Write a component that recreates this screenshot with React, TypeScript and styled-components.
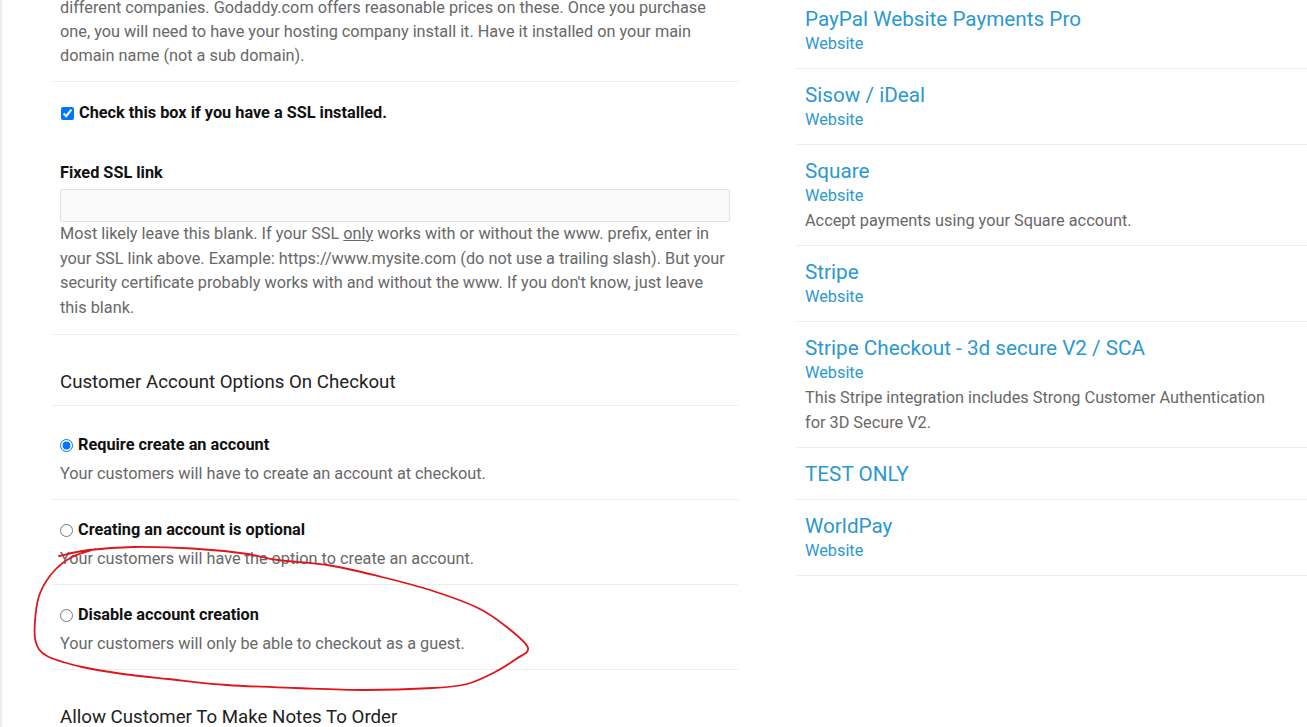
import React from "react";
import styled, { createGlobalStyle } from "styled-components";

const GlobalStyle = createGlobalStyle`
  html, body { margin: 0; padding: 0; background: #ffffff; }
  body { font-family: Roboto, "Noto Sans", Arial, sans-serif; -webkit-font-smoothing: antialiased; }
  * { box-sizing: border-box; }
`;

const Root = styled.div`
  position: relative;
  height: 727px;
  overflow: hidden;
  border-left: 2px solid #ececec;
`;

const Page = styled.div`
  display: grid;
  grid-template-columns: 686px 511px;
  column-gap: 58px;
  padding-left: 50px;
  margin-top: -7px;
`;

const LeftCol = styled.div`
  display: flex;
  flex-direction: column;
  padding-top: 3px;
`;

const Row = styled.div<{ $pt: number; $pb: number; $line?: boolean }>`
  padding: ${(p) => p.$pt}px 8px ${(p) => p.$pb}px;
  border-bottom: ${(p) => (p.$line === false ? "none" : "1px solid #eeeeee")};
`;

const Text = styled.p<{ $lh?: number }>`
  margin: 0;
  font-size: 16.3px;
  line-height: ${(p) => p.$lh ?? 24.5}px;
  color: #686868;
  white-space: nowrap;
`;

const OptionLabel = styled.label`
  display: flex;
  align-items: center;
  font-size: 16.3px;
  line-height: 24px;
  font-weight: 700;
  color: #111111;
`;

const Check = styled.input`
  width: 13px;
  height: 13px;
  margin: 0 5px 0 1px;
  accent-color: #0075ff;
`;

const Radio = styled.input`
  width: 13px;
  height: 13px;
  margin: 0 5px 0 0;
  accent-color: #0075ff;
`;

const FieldLabel = styled.div`
  font-size: 16.3px;
  line-height: 24px;
  font-weight: 700;
  color: #111111;
`;

const TextInput = styled.input`
  display: block;
  width: 670px;
  height: 33px;
  margin: 4px 0 0;
  background: #fafafa;
  border: 1px solid #e2e2e2;
  border-radius: 2px;
  outline: none;
`;

const Heading = styled.h3`
  margin: 0;
  font-size: 18.7px;
  line-height: 26px;
  font-weight: 400;
  color: #222222;
`;

const OptionDesc = styled(Text)`
  margin-top: 5px;
`;

const RightCol = styled.div`
  display: flex;
  flex-direction: column;
`;

const Gateway = styled.div`
  padding: 13px 20px 12px 9px;
  border-bottom: 1px solid #eeeeee;
`;

const GatewayTitle = styled.a`
  display: block;
  font-size: 20.7px;
  line-height: 26px;
  color: #2b98d1;
  text-decoration: none;
`;

const GatewayLink = styled.a`
  display: block;
  font-size: 16.3px;
  line-height: 24px;
  color: #2b98d1;
  text-decoration: none;
`;

const GatewayDesc = styled.p`
  margin: 0;
  font-size: 16.3px;
  line-height: 25px;
  color: #686868;
`;

const Annotation = styled.svg`
  position: absolute;
  left: -2px;
  top: 0;
  pointer-events: none;
`;

const loopPoints: [number, number][] = [
  [59, 556], [89, 550], [134, 547], [192, 548.5], [244, 553.5], [278, 560], [330, 565.5],
  [382, 577], [433, 591], [478, 608], [508, 628], [528, 648], [516, 659], [495, 672],
  [467, 684], [433, 688], [364, 690], [295, 688], [227, 685], [168, 679], [123, 674],
  [82, 667], [47, 656], [35.5, 641], [35.5, 615], [40.5, 592], [54, 571], [72, 557], [95, 549],
];

function smoothPath(pts: [number, number][]): string {
  let d = `M ${pts[0][0]} ${pts[0][1]}`;
  for (let i = 0; i < pts.length - 1; i++) {
    const p0 = pts[i - 1] ?? pts[i];
    const p1 = pts[i];
    const p2 = pts[i + 1];
    const p3 = pts[i + 2] ?? p2;
    const c1x = p1[0] + (p2[0] - p0[0]) / 6;
    const c1y = p1[1] + (p2[1] - p0[1]) / 6;
    const c2x = p2[0] - (p3[0] - p1[0]) / 6;
    const c2y = p2[1] - (p3[1] - p1[1]) / 6;
    d += ` C ${c1x.toFixed(1)} ${c1y.toFixed(1)} ${c2x.toFixed(1)} ${c2y.toFixed(1)} ${p2[0]} ${p2[1]}`;
  }
  return d;
}

type GatewayItem = { title: string; site: boolean; desc?: React.ReactNode };

const gateways: GatewayItem[] = [
  { title: "PayPal Website Payments Pro", site: true },
  { title: "Sisow / iDeal", site: true },
  { title: "Square", site: true, desc: "Accept payments using your Square account." },
  { title: "Stripe", site: true },
  {
    title: "Stripe Checkout - 3d secure V2 / SCA",
    site: true,
    desc: (
      <>
        This Stripe integration includes Strong Customer Authentication
        <br />
        for 3D Secure V2.
      </>
    ),
  },
  { title: "TEST ONLY", site: false },
  { title: "WorldPay", site: true },
];

const accountOptions = [
  { label: "Require create an account", desc: "Your customers will have to create an account at checkout.", checked: true },
  { label: "Creating an account is optional", desc: "Your customers will have the option to create an account.", checked: false },
  { label: "Disable account creation", desc: "Your customers will only be able to checkout as a guest.", checked: false },
];

export default function App() {
  return (
    <Root>
      <GlobalStyle />
      <Page>
        <LeftCol>
          <Row $pt={0} $pb={13}>
            <Text $lh={24}>
              different companies. Godaddy.com offers reasonable prices on these. Once you purchase
              <br />
              one, you will need to have your hosting company install it. Have it installed on your main
              <br />
              domain name (not a sub domain).
            </Text>
          </Row>
          <Row $pt={19} $pb={18} $line={false}>
            <OptionLabel>
              <Check type="checkbox" defaultChecked />
              Check this box if you have a SSL installed.
            </OptionLabel>
          </Row>
          <Row $pt={18} $pb={14}>
            <FieldLabel>Fixed SSL link</FieldLabel>
            <TextInput type="text" />
            <Text>
              Most likely leave this blank. If your SSL <u>only</u> works with or without the www. prefix, enter in
              <br />
              your SSL link above. Example: https://www.mysite.com (do not use a trailing slash). But your
              <br />
              security certificate probably works with and without the www. If you don't know, just leave
              <br />
              this blank.
            </Text>
          </Row>
          <Row $pt={34} $pb={10}>
            <Heading>Customer Account Options On Checkout</Heading>
          </Row>
          {accountOptions.map((o, i) => (
            <Row key={o.label} $pt={i === 0 ? 27 : 18} $pb={12.5}>
              <OptionLabel>
                <Radio type="radio" name="account" defaultChecked={o.checked} />
                {o.label}
              </OptionLabel>
              <OptionDesc $lh={24.5}>{o.desc}</OptionDesc>
            </Row>
          ))}
          <Row $pt={34} $pb={10} $line={false}>
            <Heading>Allow Customer To Make Notes To Order</Heading>
          </Row>
        </LeftCol>
        <RightCol>
          {gateways.map((g) => (
            <Gateway key={g.title}>
              <GatewayTitle href="#">{g.title}</GatewayTitle>
              {g.site && <GatewayLink href="#">Website</GatewayLink>}
              {g.desc && <GatewayDesc>{g.desc}</GatewayDesc>}
            </Gateway>
          ))}
        </RightCol>
      </Page>
      <Annotation width="1307" height="727" viewBox="0 0 1307 727">
        <path
          d={smoothPath(loopPoints)}
          fill="none"
          stroke="#e0141b"
          strokeWidth="1.8"
          strokeLinecap="round"
          strokeLinejoin="round"
        />
      </Annotation>
    </Root>
  );
}
